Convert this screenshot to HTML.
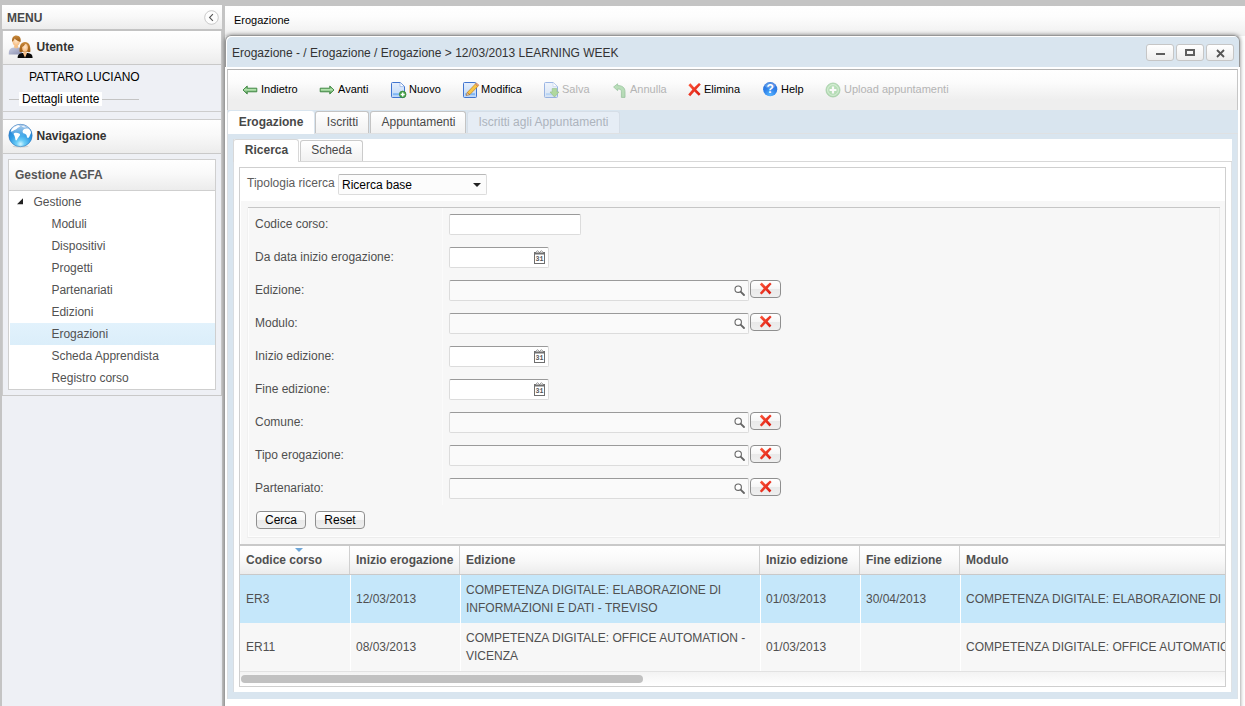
<!DOCTYPE html>
<html lang="it">
<head>
<meta charset="utf-8">
<title>Erogazione</title>
<style>
*{box-sizing:border-box;margin:0;padding:0}
html,body{width:1245px;height:706px;overflow:hidden}
body{background:#c4c4c4;font-family:"Liberation Sans",Arial,Helvetica,sans-serif;font-size:12px;color:#333;position:relative}
div,span,svg{position:absolute}
.t{white-space:nowrap;line-height:14px;height:14px}
.b{font-weight:bold}
.s{font-size:11px}
.hdr{background:linear-gradient(#ffffff 0%,#f9f9f9 45%,#ececec 100%)}
.btn{border:1px solid #8f8f8f;border-radius:4px;background:linear-gradient(#ffffff 0%,#f6f6f6 49%,#e9e9e9 51%,#efefef 100%);text-align:center;color:#000;line-height:16px;white-space:nowrap}
.wb{border:1px solid #c6c6c6;border-radius:3px;background:linear-gradient(#ffffff,#ededed);width:28px;height:17px;top:44px}
.inp{height:21px;border:1px solid #dcdcdc;border-top-color:#9a9a9a;border-radius:2px;background:#fff}
.lk{background:#fafafa}
.lab{left:255px;color:#4f4f4f}
.tn{left:9px;width:206px;height:22px;line-height:22px;color:#525252;white-space:nowrap}
.tab{border:1px solid #c4c4c4;border-bottom:none;border-radius:3px 3px 0 0;background:linear-gradient(#ffffff,#f1f1f1);text-align:center;white-space:nowrap;color:#484848;line-height:14px;padding-top:3px}
.gh{top:546px;height:28px;border-right:1px solid #d0d0d0;background:linear-gradient(#ffffff 0%,#f9f9f9 50%,#ececec 100%)}
.gc{border-right:1px solid #fff}
</style>
</head>
<body>
<div id="left" style="left:2px;top:5px;width:220px;height:701px;background:#eef0f5"></div>
<div id="menuh" class="hdr" style="left:2px;top:5px;width:220px;height:24px"></div>
<div style="left:2px;top:29px;width:220px;height:2px;background:#c3c3c3"></div>
<span class="t b" style="left:7px;top:11px;color:#484848">MENU</span>
<svg style="left:204px;top:10px" width="15" height="15" viewBox="0 0 15 15"><circle cx="7.5" cy="7.5" r="6.8" fill="#fdfdfd" stroke="#c4c4c4" stroke-width="0.9"/><path d="M8.9 4.2 L5.6 7.5 L8.9 10.8" fill="none" stroke="#555" stroke-width="1.1"/></svg>
<div id="uth" class="hdr" style="left:3px;top:31px;width:218px;height:34px;border-bottom:1px solid #c9c9c9"></div>
<span class="t b" style="left:36.5px;top:40px;color:#333">Utente</span>
<div id="utc" style="left:3px;top:65px;width:218px;height:47px;background:#eef0f5;border-bottom:1px solid #cdcdcd"></div>
<span class="t" style="left:29px;top:70px;color:#000">PATTARO LUCIANO</span>
<div style="left:9px;top:99px;width:130px;height:1px;background:#c4c4c4"></div>
<span class="t" style="left:19px;top:92px;width:83px;padding-left:3px;color:#000;background:#fff">Dettagli utente</span>
<div id="navh" class="hdr" style="left:3px;top:119px;width:218px;height:35px;border-top:1px solid #cdcdcd;border-bottom:1px solid #c9c9c9"></div>
<span class="t b" style="left:36.5px;top:129px;color:#333">Navigazione</span>
<div style="left:2px;top:395px;width:220px;height:1px;background:#c9c9c9"></div>
<div style="left:2px;top:31px;width:1px;height:364px;background:#cbcbcb"></div>
<div style="left:221px;top:31px;width:1px;height:364px;background:#cbcbcb"></div>
<div id="tree" style="left:8px;top:159px;width:208px;height:231px;border:1px solid #cfcfcf;background:#fff"></div>
<div id="treeh" class="hdr" style="left:9px;top:160px;width:206px;height:31px;border-bottom:1px solid #cfcfcf"></div>
<span class="t b" style="left:15px;top:168px;color:#555">Gestione AGFA</span>
<div class="tn" style="top:191px;left:33.4px;width:auto">Gestione</div>
<div class="tn" style="top:213px;left:51.4px;width:auto">Moduli</div>
<div class="tn" style="top:235px;left:51.4px;width:auto">Dispositivi</div>
<div class="tn" style="top:257px;left:51.4px;width:auto">Progetti</div>
<div class="tn" style="top:279px;left:51.4px;width:auto">Partenariati</div>
<div class="tn" style="top:301px;left:51.4px;width:auto">Edizioni</div>
<div style="left:10px;top:323px;width:205px;height:22px;background:linear-gradient(#e2f2fc,#dbeefa)"></div>
<div class="tn" style="top:323px;left:51.4px;width:auto">Erogazioni</div>
<div class="tn" style="top:345px;left:51.4px;width:auto">Scheda Apprendista</div>
<div class="tn" style="top:367px;left:51.4px;width:auto">Registro corso</div>
<svg style="left:16px;top:197px" width="8" height="8" viewBox="0 0 8 8"><path d="M7 1.2 L7 7.2 L1 7.2 Z" fill="#222"/></svg>
<div id="main" style="left:225px;top:6px;width:1020px;height:700px;background:#fff"></div>
<div id="mtab" style="left:225px;top:6px;width:1020px;height:30px;background:linear-gradient(#ffffff 0%,#fdfdfd 35%,#efefef 100%)"></div>
<span class="t s" style="left:234px;top:13px;color:#000">Erogazione</span>
<div id="win" style="left:225px;top:35px;width:1015px;height:690px;background:#fff;border-radius:6px 6px 0 0;box-shadow:0 0 4px rgba(0,0,0,0.5)"></div>
<div id="wt" style="left:225px;top:35px;width:1015px;height:32px;background:#d9e5ef;border:1px solid #979797;border-bottom:none;border-radius:6px 6px 0 0;box-shadow:inset 1px 1px 0 #fff"></div>
<div id="wtp" style="left:227px;top:110px;width:1011px;height:589px;background:#d9e5ef;border-left:1px solid #dcdfe2"></div>
<span class="t" style="left:232px;top:46px;color:#333">Erogazione - / Erogazione / Erogazione &gt; 12/03/2013 LEARNING WEEK</span>
<div class="wb" style="left:1146px"><div style="left:9px;top:8px;width:9px;height:2px;background:#5e5e5e"></div></div>
<div class="wb" style="left:1176px"><div style="left:8px;top:4px;width:10px;height:7px;border:2px solid #5e5e5e"></div></div>
<div class="wb" style="left:1206px"><svg style="left:9px;top:4px" width="9" height="9" viewBox="0 0 9 9"><path d="M1 1 L8 8 M8 1 L1 8" stroke="#555" stroke-width="1.8" fill="none"/></svg></div>
<div id="tb" style="left:227px;top:69px;width:1011px;height:41px;background:linear-gradient(#ffffff 0%,#fcfcfc 30%,#eeeeee 75%,#eeeeee 100%);border:1px solid #c6c6c6;border-top-color:#b4b4b4;border-bottom:none"></div>
<span class="t s" style="left:261px;top:82px;color:#000">Indietro</span>
<span class="t s" style="left:338px;top:82px;color:#000">Avanti</span>
<span class="t s" style="left:409px;top:82px;color:#000">Nuovo</span>
<span class="t s" style="left:481px;top:82px;color:#000">Modifica</span>
<span class="t s" style="left:562px;top:82px;color:#b4b4b4">Salva</span>
<span class="t s" style="left:630px;top:82px;color:#b4b4b4">Annulla</span>
<span class="t s" style="left:704px;top:82px;color:#000">Elimina</span>
<span class="t s" style="left:781px;top:82px;color:#000">Help</span>
<span class="t s" style="left:844px;top:82px;color:#b4b4b4">Upload appuntamenti</span>
<svg id="ic-users" style="left:8px;top:35px" width="26" height="24" viewBox="0 0 26 24">
<defs>
<linearGradient id="gBody" x1="0" y1="0" x2="1" y2="1"><stop offset="0" stop-color="#c9cde0"/><stop offset="1" stop-color="#8a8fb0"/></linearGradient>
<radialGradient id="gSkin" cx="0.5" cy="0.4" r="0.6"><stop offset="0" stop-color="#ffe9cf"/><stop offset="1" stop-color="#f5b87a"/></radialGradient>
<linearGradient id="gHair" x1="0" y1="0" x2="0" y2="1"><stop offset="0" stop-color="#c98a3c"/><stop offset="1" stop-color="#9a5a14"/></linearGradient>
</defs>
<path d="M0.8 19.5 C0.5 15 2 12.6 6 12.4 L10.5 12.4 C13 12.6 14 14 14 19.5 Z" fill="url(#gBody)"/>
<path d="M6.3 10.5 L10 10.5 L10.3 12.6 L8.2 13.6 L6 12.6 Z" fill="#f3c08a"/>
<ellipse cx="8.2" cy="6.5" rx="3.7" ry="4.6" fill="url(#gSkin)"/>
<path d="M4.2 6.8 C3.6 2.6 5.6 0.4 8.4 0.5 C11.6 0.6 13.4 3 12.6 7 C11 6.6 8 5.6 6.6 3.6 C6 5 5.2 6.2 4.2 6.8 Z" fill="url(#gHair)"/>
<path d="M9.6 23 C9.6 19.6 11.6 18.2 14.4 18 L19.6 18 C22.8 18.2 24.6 19.6 24.6 23 Z" fill="#0a0a0a"/>
<path d="M15.6 17 L18.4 17 L18.8 18.4 L17 22.8 L15.2 18.4 Z" fill="#f6c08a"/>
<path d="M11.6 16.8 C11.2 10.6 13 7 17 7 C21 7 22.8 10.6 22.4 16.8 C21.4 17.4 20.2 17.2 19.4 16.8 L14.6 16.8 C13.8 17.2 12.6 17.4 11.6 16.8 Z" fill="url(#gHair)"/>
<ellipse cx="17" cy="12.8" rx="2.9" ry="4" fill="url(#gSkin)"/>
<path d="M13.8 12 C14.2 9.6 15.4 8.6 17.2 8.8 C16.6 10.4 15.4 11.4 13.8 12 Z" fill="#b06f22"/>
</svg>
<svg id="ic-globe" style="left:8px;top:123px" width="26" height="26" viewBox="0 0 26 26">
<defs>
<radialGradient id="gGl" cx="0.5" cy="0.88" r="0.95"><stop offset="0" stop-color="#d4f6ff"/><stop offset="0.18" stop-color="#6ccdf7"/><stop offset="0.5" stop-color="#2f9ae3"/><stop offset="0.85" stop-color="#2b7fd0"/><stop offset="1" stop-color="#2468b4"/></radialGradient>
<linearGradient id="gGh" x1="0" y1="0" x2="0" y2="1"><stop offset="0" stop-color="#ffffff" stop-opacity="0.65"/><stop offset="1" stop-color="#ffffff" stop-opacity="0"/></linearGradient>
</defs>
<ellipse cx="12.6" cy="23.4" rx="8" ry="1.2" fill="#000" opacity="0.12"/>
<ellipse cx="12.5" cy="12.5" rx="11.7" ry="11.2" fill="url(#gGl)" stroke="#2a6fb4" stroke-width="0.5"/>
<ellipse cx="12.5" cy="7.6" rx="9.6" ry="6" fill="url(#gGh)"/>
<path d="M2.6 8.6 C3.4 5.6 6 3.2 9.2 2.4 C10.6 2.2 11.8 2.6 12 3.6 C11 4.6 9.6 4.8 8.8 5.8 C8 6.8 6.6 6.8 5.6 7.4 C4.6 8 3.6 8.8 2.6 8.6 Z" fill="#fff"/>
<path d="M6 10.2 C7.4 9.4 9.4 9.6 11.2 10.4 C12.4 11 12.2 12.2 11.2 13.2 C10.2 14.2 9.6 15.6 8.8 17 C8.4 17.8 7.6 17.6 7.4 16.6 C7.2 15.2 7 13.8 6.4 12.6 C5.8 11.8 5.4 10.8 6 10.2 Z" fill="#fff"/>
<path d="M14.8 7.4 C15.6 5.8 17.6 5 19.6 5.6 C21.6 6.2 22.8 7.8 23 9.4 C23 10.6 22.2 11.4 21.8 12.6 C21.4 13.8 20.8 15 19.8 15 C19 14.8 18.8 13.6 18.6 12.6 C18.4 11.4 17.2 11 16.2 10.6 C15 10.2 14.2 8.8 14.8 7.4 Z" fill="#fff"/>
<path d="M13.6 3.2 C15.2 2.8 17 3.4 18 4.4 C16.6 4.6 14.8 4.4 13.6 3.2 Z" fill="#fff" opacity="0.8"/>
</svg>
<!-- toolbar icons -->
<svg style="left:242px;top:85px" width="16" height="10" viewBox="0 0 16 10">
<defs><linearGradient id="gAr" x1="0" y1="0" x2="0" y2="1"><stop offset="0" stop-color="#4f9f50"/><stop offset="0.45" stop-color="#b4e3ae"/><stop offset="1" stop-color="#3a8a3e"/></linearGradient></defs>
<path d="M1 5 L5.2 1 L5.2 3.2 L14.8 3.2 L14.8 6.8 L5.2 6.8 L5.2 9 Z" fill="url(#gAr)" stroke="#37803a" stroke-width="0.9" stroke-linejoin="round"/></svg>
<svg style="left:319px;top:85px" width="16" height="10" viewBox="0 0 16 10">
<path d="M15 5 L10.8 1 L10.8 3.2 L1.2 3.2 L1.2 6.8 L10.8 6.8 L10.8 9 Z" fill="url(#gAr)" stroke="#37803a" stroke-width="0.9" stroke-linejoin="round"/></svg>
<svg style="left:390px;top:81px" width="18" height="18" viewBox="0 0 18 18">
<defs><linearGradient id="gPg" x1="0" y1="0" x2="0" y2="1"><stop offset="0" stop-color="#e6effc"/><stop offset="1" stop-color="#bcd6f7"/></linearGradient>
<g id="page"><path d="M2.5 1.5 H10 L14.5 5.5 V15.6 Q14.5 16.5 13.5 16.5 H2.5 Q1.5 16.5 1.5 15.6 V2.5 Q1.5 1.5 2.5 1.5 Z" fill="url(#gPg)" stroke="#3f74d0" stroke-width="1"/><path d="M10 1.8 V5.6 H14.2" fill="#fff" stroke="#9ab8ea" stroke-width="0.8"/><rect x="3" y="12.2" width="10" height="2" fill="#7fb7f5"/></g></defs>
<use href="#page"/>
<circle cx="12.7" cy="13.4" r="3.3" fill="#4aa54a" stroke="#2f7f32" stroke-width="0.7"/><path d="M12.7 11.4 V15.4 M10.7 13.4 H14.7" stroke="#fff" stroke-width="1.5"/></svg>
<svg style="left:462px;top:81px" width="18" height="18" viewBox="0 0 18 18">
<path d="M2.5 1.5 H12 Q14.5 1.5 14.5 3 V15.6 Q14.5 16.5 13.5 16.5 H2.5 Q1.5 16.5 1.5 15.6 V2.5 Q1.5 1.5 2.5 1.5 Z" fill="url(#gPg)" stroke="#3f74d0" stroke-width="1"/><rect x="3" y="12.2" width="10" height="2" fill="#7fb7f5"/>
<path d="M5.2 11.6 L13.4 3 L16 5.2 L7.8 13.6 Z" fill="#f7c645" stroke="#c8862a" stroke-width="0.8"/><path d="M5.2 11.6 L7.8 13.6 L4.2 14.6 Z" fill="#f6d7a8" stroke="#a0642a" stroke-width="0.6"/><path d="M13.4 3 L14.4 2 L17 4.2 L16 5.2 Z" fill="#f0a0a0" stroke="#c8862a" stroke-width="0.6"/></svg>
<svg style="left:543px;top:81px;opacity:0.5" width="18" height="18" viewBox="0 0 18 18">
<use href="#page"/>
<path d="M9.2 7.6 H13.8 V11 H16 L11.5 16 L7 11 H9.2 Z" fill="#6fbf4a" stroke="#3f8f2a" stroke-width="0.7"/></svg>
<svg style="left:612px;top:83px;opacity:0.45" width="15" height="16" viewBox="0 0 15 16">
<path d="M1.6 4 L5.6 0.8 L5.6 2.6 C10 2.4 13 4.6 13 8.6 V14.4 H9.4 V8.8 C9.4 6.6 8 5.8 5.6 6 L5.6 7.6 Z" fill="#6fbf6f" stroke="#2f8a3a" stroke-width="0.8" stroke-linejoin="round"/></svg>
<svg style="left:687px;top:82px" width="15" height="15" viewBox="0 0 15 15">
<defs><linearGradient id="gRx" x1="0" y1="0" x2="1" y2="1"><stop offset="0" stop-color="#ff5a3c"/><stop offset="1" stop-color="#d8140c"/></linearGradient></defs>
<path d="M1.4 3.2 L3.4 1.2 L7.2 5.4 L12 1 L13.8 2.6 L9.2 7.4 L13.6 12 L11.8 13.8 L7.4 9.4 L3.2 14.2 L1.2 12.6 L5.4 7.6 Z" fill="url(#gRx)"/></svg>
<svg style="left:762px;top:81px" width="16" height="17" viewBox="0 0 16 17">
<defs><radialGradient id="gHp" cx="0.5" cy="0.9" r="1"><stop offset="0" stop-color="#56b4ff"/><stop offset="0.5" stop-color="#2d7fe8"/><stop offset="1" stop-color="#2a6fd8"/></radialGradient></defs>
<circle cx="8.2" cy="8.2" r="7.1" fill="url(#gHp)"/><ellipse cx="8.2" cy="4.6" rx="5.2" ry="3" fill="#fff" opacity="0.22"/>
<text x="8.2" y="12.4" text-anchor="middle" font-family="Liberation Sans, sans-serif" font-weight="bold" font-size="12" fill="#fff">?</text></svg>
<svg style="left:825px;top:82px;opacity:0.45" width="16" height="16" viewBox="0 0 16 16">
<circle cx="8" cy="8" r="7" fill="#6cc26c" stroke="#3f9a45" stroke-width="0.8"/><circle cx="8" cy="8" r="5.4" fill="none" stroke="#c4ecc4" stroke-width="0.8"/><path d="M8 4.6 V11.4 M4.6 8 H11.4" stroke="#fff" stroke-width="2.2"/></svg>

<div style="left:228px;top:133px;width:1010px;height:1px;background:#dfe1e3"></div>
<div class="tab b" style="left:228px;top:111px;width:86px;height:23px;background:#fff;border-color:#fff;color:#484848">Erogazione</div>
<div class="tab" style="left:315px;top:111px;width:54px;height:22px;padding-left:1px">Iscritti</div>
<div class="tab" style="left:370px;top:111px;width:96px;height:22px;padding-left:1px">Appuntamenti</div>
<div class="tab" style="left:467px;top:111px;width:153px;height:22px;background:#e6edf5;border-color:#d6dee7;color:#adb4bd">Iscritti agli Appuntamenti</div>
<div id="tp" style="left:233px;top:139px;width:999px;height:553px;background:#fff;border-left:1px solid #d9dde1"></div>
<div style="left:1231px;top:162px;width:1px;height:530px;background:#dfe2e5"></div>
<div style="left:1237px;top:134px;width:1px;height:565px;background:#dde3e8"></div>
<div style="left:233px;top:161px;width:999px;height:1px;background:#d8d8d8"></div>
<div class="tab b" style="left:233px;top:139px;width:66px;height:23px;background:#fff;border-color:#d8d8d8;color:#484848;padding-left:1px">Ricerca</div>
<div class="tab" style="left:300px;top:140px;width:63px;height:21px;padding-top:2px;border-color:#cbcbcb">Scheda</div>
<div id="ip" style="left:239px;top:167px;width:987px;height:520px;border:1px solid #cfcfcf;background:#fff"></div>
<span class="t" style="left:247px;top:176px;color:#5c5c5c">Tipologia ricerca</span>
<div style="left:338px;top:174px;width:149px;height:21px;border:1px solid #dcdcdc;border-top-color:#b8b8b8;border-radius:2px;background:#fcfcfc"></div>
<span class="t" style="left:342px;top:178px;color:#000">Ricerca base</span>
<svg style="left:472px;top:182px" width="10" height="6" viewBox="0 0 10 6"><path d="M1 1 L9 1 L5 5 Z" fill="#222"/></svg>
<div style="left:241px;top:201px;width:984px;height:343px;background:#f7f7f7"></div>
<div style="left:247px;top:207px;width:973px;height:331px;border:1px solid #ececec;border-left-color:#f1f1f1;border-top-color:#f7f7f7;background:#f7f7f7;box-shadow:inset 1px 0 0 #fdfdfd,inset 0 -1px 0 #fdfdfd"></div>
<div style="left:248px;top:207px;width:972px;height:1px;background:#c6c6c6"></div>
<div style="left:442px;top:208px;width:1px;height:297px;background:#fbfbfb"></div>
<span class="t lab" style="top:217px">Codice corso:</span>
<div class="inp" style="left:449px;top:214px;width:132px"></div>
<span class="t lab" style="top:250px">Da data inizio erogazione:</span>
<div class="inp" style="left:449px;top:247px;width:100px"></div>
<svg class="cal" style="left:534px;top:250px" width="11" height="14" viewBox="0 0 11 14"><use href="#cal"/></svg>
<span class="t lab" style="top:283px">Edizione:</span>
<div class="inp lk" style="left:449px;top:280px;width:300px"></div>
<svg style="left:734px;top:285px" width="11" height="11" viewBox="0 0 11 11"><use href="#mag"/></svg>
<div class="btn" style="left:750px;top:280px;width:31px;height:18px"><svg style="left:8px;top:1px" width="13" height="13" viewBox="0 0 13 13"><use href="#rx"/></svg></div>
<span class="t lab" style="top:316px">Modulo:</span>
<div class="inp lk" style="left:449px;top:313px;width:300px"></div>
<svg style="left:734px;top:318px" width="11" height="11" viewBox="0 0 11 11"><use href="#mag"/></svg>
<div class="btn" style="left:750px;top:313px;width:31px;height:18px"><svg style="left:8px;top:1px" width="13" height="13" viewBox="0 0 13 13"><use href="#rx"/></svg></div>
<span class="t lab" style="top:349px">Inizio edizione:</span>
<div class="inp" style="left:449px;top:346px;width:100px"></div>
<svg class="cal" style="left:534px;top:349px" width="11" height="14" viewBox="0 0 11 14"><use href="#cal"/></svg>
<span class="t lab" style="top:382px">Fine edizione:</span>
<div class="inp" style="left:449px;top:379px;width:100px"></div>
<svg class="cal" style="left:534px;top:382px" width="11" height="14" viewBox="0 0 11 14"><use href="#cal"/></svg>
<span class="t lab" style="top:415px">Comune:</span>
<div class="inp lk" style="left:449px;top:412px;width:300px"></div>
<svg style="left:734px;top:417px" width="11" height="11" viewBox="0 0 11 11"><use href="#mag"/></svg>
<div class="btn" style="left:750px;top:412px;width:31px;height:18px"><svg style="left:8px;top:1px" width="13" height="13" viewBox="0 0 13 13"><use href="#rx"/></svg></div>
<span class="t lab" style="top:448px">Tipo erogazione:</span>
<div class="inp lk" style="left:449px;top:445px;width:300px"></div>
<svg style="left:734px;top:450px" width="11" height="11" viewBox="0 0 11 11"><use href="#mag"/></svg>
<div class="btn" style="left:750px;top:445px;width:31px;height:18px"><svg style="left:8px;top:1px" width="13" height="13" viewBox="0 0 13 13"><use href="#rx"/></svg></div>
<span class="t lab" style="top:481px">Partenariato:</span>
<div class="inp lk" style="left:449px;top:478px;width:300px"></div>
<svg style="left:734px;top:483px" width="11" height="11" viewBox="0 0 11 11"><use href="#mag"/></svg>
<div class="btn" style="left:750px;top:478px;width:31px;height:18px"><svg style="left:8px;top:1px" width="13" height="13" viewBox="0 0 13 13"><use href="#rx"/></svg></div>
<div class="btn" style="left:256px;top:511px;width:50px;height:18px">Cerca</div>
<div class="btn" style="left:315px;top:511px;width:50px;height:18px">Reset</div>
<div style="left:240px;top:544px;width:985px;height:2px;background:#c9c9c9"></div>
<div class="gh" style="left:240px;width:110px"></div>
<span class="t b" style="left:246px;top:553px;color:#505050">Codice corso</span>
<div class="gh" style="left:350px;width:110px"></div>
<span class="t b" style="left:356px;top:553px;color:#505050">Inizio erogazione</span>
<div class="gh" style="left:460px;width:300px"></div>
<span class="t b" style="left:466px;top:553px;color:#505050">Edizione</span>
<div class="gh" style="left:760px;width:100px"></div>
<span class="t b" style="left:766px;top:553px;color:#505050">Inizio edizione</span>
<div class="gh" style="left:860px;width:100px"></div>
<span class="t b" style="left:866px;top:553px;color:#505050">Fine edizione</span>
<div class="gh" style="left:960px;width:265px;border-right:none"></div>
<span class="t b" style="left:966px;top:553px;color:#505050">Modulo</span>
<div style="left:240px;top:574px;width:985px;height:1px;background:#c9c9c9"></div>
<svg style="left:295px;top:548px" width="8" height="4" viewBox="0 0 8 4"><path d="M0 0 L8 0 L4 4 Z" fill="#6ea6d8"/></svg>
<div style="left:240px;top:575px;width:985px;height:48px;background:#c5e7fa"></div>
<div style="left:350px;top:575px;width:1px;height:48px;background:#fff"></div>
<span class="t" style="left:246px;top:592px;color:#505050">ER3</span>
<div style="left:460px;top:575px;width:1px;height:48px;background:#fff"></div>
<span class="t" style="left:356px;top:592px;color:#505050">12/03/2013</span>
<div style="left:760px;top:575px;width:1px;height:48px;background:#fff"></div>
<span class="t" style="left:466px;top:583px;color:#505050">COMPETENZA DIGITALE: ELABORAZIONE DI</span>
<span class="t" style="left:466px;top:601px;color:#505050">INFORMAZIONI E DATI - TREVISO</span>
<div style="left:860px;top:575px;width:1px;height:48px;background:#fff"></div>
<span class="t" style="left:766px;top:592px;color:#505050">01/03/2013</span>
<div style="left:960px;top:575px;width:1px;height:48px;background:#fff"></div>
<span class="t" style="left:866px;top:592px;color:#505050">30/04/2013</span>
<span class="t" style="left:966px;top:592px;color:#505050;width:259px;overflow:hidden">COMPETENZA DIGITALE: ELABORAZIONE DI</span>
<div style="left:240px;top:623px;width:985px;height:48px;background:#f7f7f7"></div>
<div style="left:350px;top:623px;width:1px;height:48px;background:#fff"></div>
<span class="t" style="left:246px;top:640px;color:#505050">ER11</span>
<div style="left:460px;top:623px;width:1px;height:48px;background:#fff"></div>
<span class="t" style="left:356px;top:640px;color:#505050">08/03/2013</span>
<div style="left:760px;top:623px;width:1px;height:48px;background:#fff"></div>
<span class="t" style="left:466px;top:631px;color:#505050">COMPETENZA DIGITALE: OFFICE AUTOMATION -</span>
<span class="t" style="left:466px;top:649px;color:#505050">VICENZA</span>
<div style="left:860px;top:623px;width:1px;height:48px;background:#fff"></div>
<span class="t" style="left:766px;top:640px;color:#505050">01/03/2013</span>
<div style="left:960px;top:623px;width:1px;height:48px;background:#fff"></div>
<span class="t" style="left:966px;top:640px;color:#505050;width:259px;overflow:hidden">COMPETENZA DIGITALE: OFFICE AUTOMATION</span>
<div style="left:240px;top:671px;width:985px;height:1px;background:#e2e2e2"></div>
<div style="left:240px;top:672px;width:985px;height:14px;background:linear-gradient(#f3f3f3,#ffffff)"></div>
<div style="left:241px;top:675px;width:402px;height:8px;border-radius:4px;background:#c1c1c1"></div>
<svg width="0" height="0" style="left:0;top:0"><defs>
<g id="cal"><rect x="0.5" y="2.5" width="10" height="11" fill="#fff" stroke="#6e6e6e" stroke-width="1"/><rect x="0" y="2.2" width="11" height="2.3" fill="#707070"/><path d="M1.6 2.6 L3.5 0.6 L5.5 2.6 L7.4 0.6 L9.4 2.6" fill="#fff" stroke="#808080" stroke-width="0.8"/><text x="5.6" y="11.2" text-anchor="middle" font-family="Liberation Mono, monospace" font-weight="bold" font-size="7.5" fill="#555" textLength="8" lengthAdjust="spacingAndGlyphs">31</text></g>
<g id="mag"><circle cx="4.2" cy="4.2" r="3.2" fill="#fff" stroke="#666" stroke-width="1.1"/><path d="M6.6 6.6 L10 10" stroke="#666" stroke-width="1.8" stroke-linecap="round"/></g>
<g id="rx"><path d="M0.8 2.6 L2.8 0.6 L6.6 4.6 L11 0.4 L12.6 2 L8.6 6.4 L12.4 10.6 L10.6 12.4 L6.6 8.2 L2.6 12.6 L0.8 10.9 L4.7 6.5 Z" fill="url(#gRx)"/></g>
</defs></svg>
</body>
</html>
